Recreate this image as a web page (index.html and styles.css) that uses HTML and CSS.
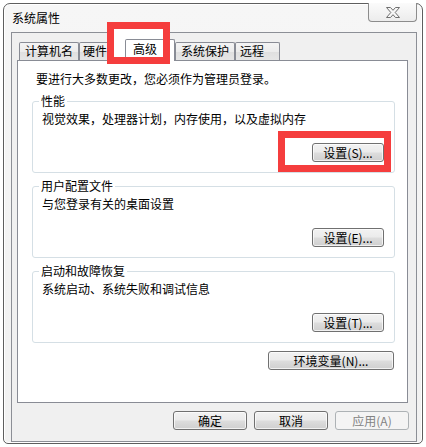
FILE: index.html
```html
<!DOCTYPE html>
<html lang="zh-CN">
<head>
<meta charset="utf-8">
<title>系统属性</title>
<link rel="stylesheet" href="styles.css">
</head>
<body>
<div class="window">
  <div class="titlebar">
    <span class="title">系统属性</span>
    <div class="close">
      <svg width="14" height="11" viewBox="0 0 14 11"><polygon points="0.5,0.5 4.5,0.5 7,3.3 9.5,0.5 13.5,0.5 9.2,5.5 13.5,10.5 9.5,10.5 7,7.7 4.5,10.5 0.5,10.5 4.8,5.5" fill="#f7f7f7" stroke="#6f6f6f" stroke-width="1" stroke-linejoin="round"/></svg>
    </div>
  </div>
  <div class="client">
    <div class="tabs">
      <div class="tab t1">计算机名</div>
      <div class="tab t2">硬件</div>
      <div class="tab t3 active">高级</div>
      <div class="tab t4">系统保护</div>
      <div class="tab t5">远程</div>
    </div>
    <div class="panel">
      <p class="intro">要进行大多数更改，您必须作为管理员登录。</p>
      <fieldset class="group">
        <legend>性能</legend>
        <div class="group-body">
          <p class="desc">视觉效果，处理器计划，内存使用，以及虚拟内存</p>
          <div class="actions"><button class="btn set">设置(S)...</button></div>
        </div>
      </fieldset>
      <fieldset class="group">
        <legend>用户配置文件</legend>
        <div class="group-body">
          <p class="desc">与您登录有关的桌面设置</p>
          <div class="actions"><button class="btn set">设置(E)...</button></div>
        </div>
      </fieldset>
      <fieldset class="group">
        <legend>启动和故障恢复</legend>
        <div class="group-body">
          <p class="desc">系统启动、系统失败和调试信息</p>
          <div class="actions"><button class="btn set">设置(T)...</button></div>
        </div>
      </fieldset>
      <div class="env-row"><button class="btn env">环境变量(N)...</button></div>
    </div>
    <div class="footer">
      <button class="btn dlg">确定</button>
      <button class="btn dlg">取消</button>
      <button class="btn dlg disabled">应用(A)</button>
    </div>
  </div>
</div>
<div class="mark-fill"></div>
<div class="mark mark-tab"></div>
<div class="mark mark-btn"></div>
</body>
</html>
```
FILE: styles.css
```css
* { box-sizing: border-box; }
html, body { margin: 0; padding: 0; background: #ffffff; }
body {
  font-family: "Noto Sans CJK SC", "Liberation Sans", sans-serif;
  font-size: 12px;
  line-height: 14px;
  color: #000;
  width: 426px;
  height: 447px;
  overflow: hidden;
}
.window {
  margin: 3px 0 0 3px;
  width: 420px;
  height: 441px;
  border: 1px solid #5e5e5e;
  border-radius: 7px 7px 5px 5px;
  background: linear-gradient(#f6f6f6, #f1f1f1);
  box-shadow: inset 0 0 0 1px #ffffff;
  display: flex;
  flex-direction: column;
}
.titlebar {
  height: 28px;
  display: flex;
  align-items: flex-start;
}
.title {
  padding: 7px 0 0 8px;
  line-height: 14px;
}
.close {
  margin: -1px 5px 0 auto;
  width: 49px;
  height: 19px;
  border: 1px solid #8c8c8c;
  border-top: none;
  border-radius: 0 0 4px 4px;
  background: linear-gradient(#fbfbfb, #ececec);
  display: flex;
  align-items: center;
  justify-content: center;
}
.close svg { display: block; }
.client {
  margin: 0 5px 0 7px;
  height: 410px;
  border: 1px solid #8c8f96;
  background: #f0f0f0;
  padding: 6px 8px 0 5px;
  display: flex;
  flex-direction: column;
}
.tabs {
  height: 21px;
  display: flex;
  align-items: flex-end;
  padding-left: 2px;
}
.tab {
  height: 18px;
  border: 1px solid #898c95;
  border-bottom: none;
  border-radius: 2px 2px 0 0;
  background: linear-gradient(#f4f4f4 0%, #ececec 50%, #dfdfdf 51%, #e6e6e6 100%);
  line-height: 16px;
  white-space: nowrap;
}
.t1 { width: 60px; text-align: center; }
.t2 { width: 46px; padding-left: 3px; }
.t3 { width: 50px; padding-left: 7px; }
.t4 { width: 60px; text-align: center; }
.t5 { width: 45px; padding-left: 4px; }
.tab.active {
  height: 22px;
  margin-bottom: -1px;
  background: #ffffff;
  line-height: 18px;
  position: relative;
  z-index: 3;
}
.panel {
  height: 343px;
  border: 1px solid #898c95;
  background: #ffffff;
  padding: 11px 12px 0 14px;
}
.intro {
  margin: 0 0 8px 4px;
  line-height: 14px;
}
.group {
  margin: 0 0 6px 0;
  border: 1px solid #d5dfe5;
  border-radius: 3px;
  padding: 4px 10px 10px 0;
  min-width: 0;
}
.group legend {
  margin-left: 6px;
  padding: 0 2px;
  line-height: 14px;
}
.group-body { padding-left: 9px; }
.desc { margin: 0; line-height: 14px; }
.actions {
  margin-top: 17px;
  display: flex;
  justify-content: flex-end;
}
.btn {
  height: 19px;
  padding: 0;
  border: 1px solid #707070;
  border-radius: 3px;
  background: linear-gradient(#f2f2f2 0%, #ebebeb 48%, #dddddd 52%, #cfcfcf 100%);
  box-shadow: inset 0 0 0 1px rgba(255,255,255,0.7);
  font-family: "Noto Sans CJK SC", "Liberation Sans", sans-serif;
  font-size: 12px;
  line-height: 16px;
  color: #000;
  text-align: center;
}
.set { width: 72px; }
.env-row {
  margin-top: 8px;
  display: flex;
  justify-content: flex-end;
  padding-right: 1px;
}
.env { width: 126px; }
.footer {
  margin: 8px -1px 0 0;
  display: flex;
  justify-content: flex-end;
  gap: 7px;
}
.dlg { width: 74px; }
.btn.disabled {
  border-color: #adb2b5;
  background: #f4f4f4;
  box-shadow: none;
  color: #838383;
}
.mark-fill {
  position: absolute;
  left: 114px;
  top: 29px;
  width: 49px;
  height: 28px;
  background: #ffffff;
  z-index: 2;
}
.mark {
  position: absolute;
  border: 7px solid #f53d3d;
  z-index: 5;
}
.mark-tab { left: 107px; top: 22px; width: 63px; height: 42px; }
.mark-btn { left: 278px; top: 131px; width: 113px; height: 41px; }
```
